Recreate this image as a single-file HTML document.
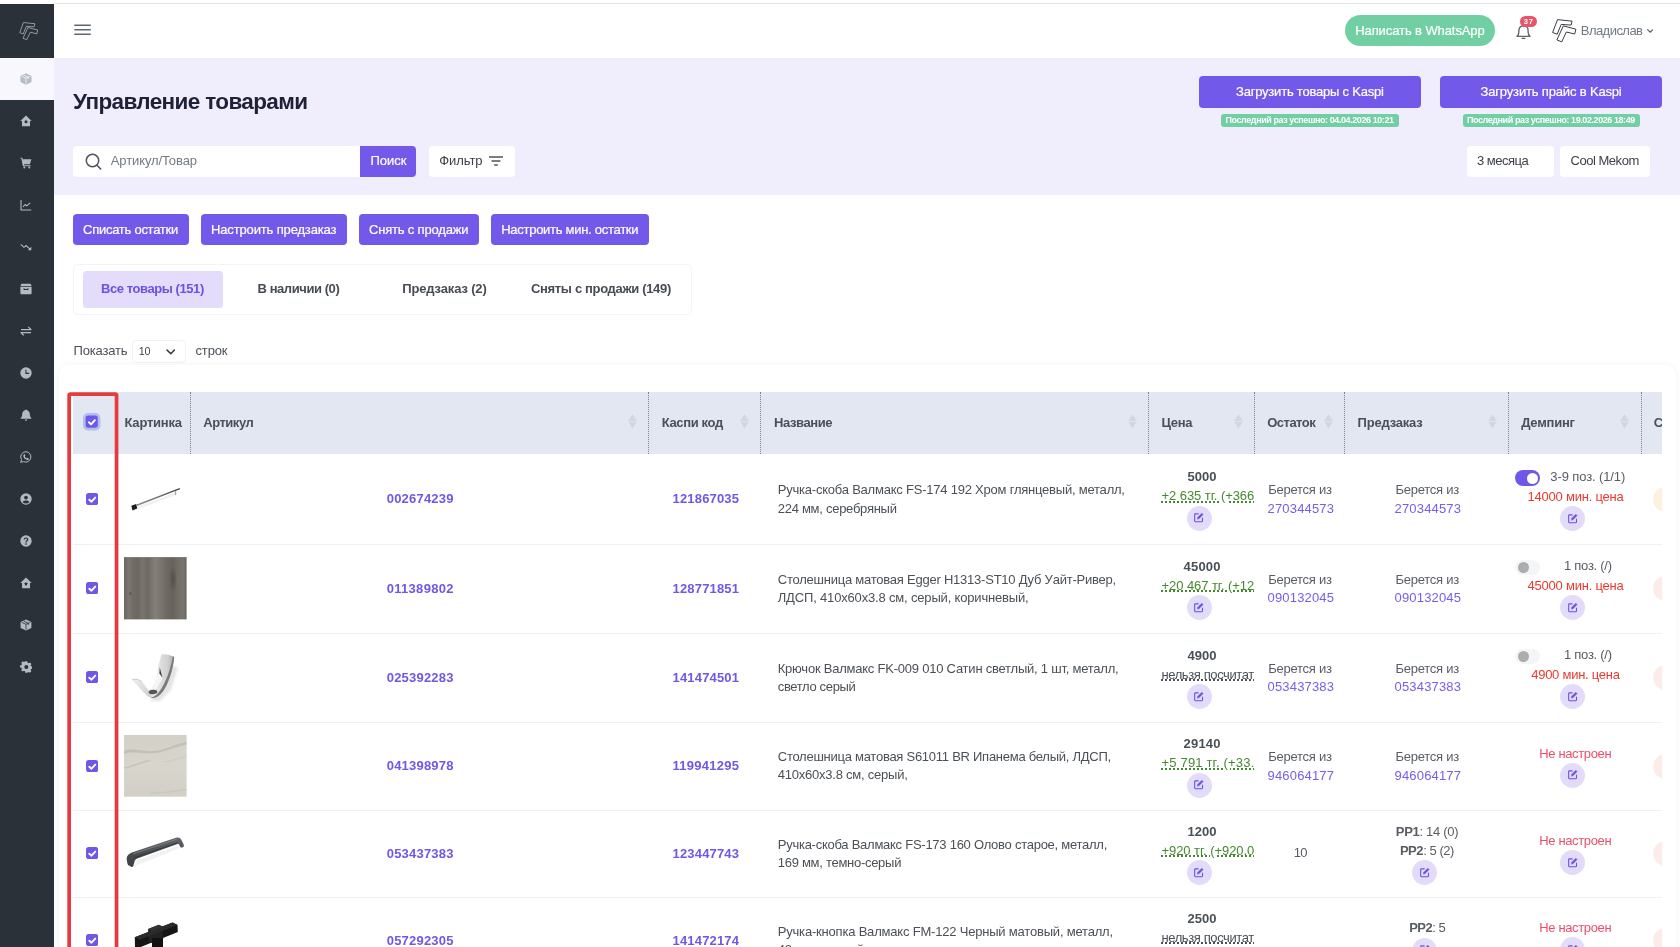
<!DOCTYPE html>
<html lang="ru">
<head>
<meta charset="utf-8">
<title>Управление товарами</title>
<style>
*{box-sizing:border-box}
html,body{margin:0;padding:0}
body{width:1680px;height:947px;overflow:hidden;position:relative;background:#fff;
  font-family:"Liberation Sans",sans-serif;font-size:13px;color:#495057}
.a,.t,.clip,.eb,.tg,.st,.cb,.sep{position:absolute;display:block}
#txt{position:absolute;left:0;top:0;width:1680px;height:947px;will-change:transform}
.t{white-space:nowrap}
.t b{font-weight:700}
.clip{overflow:hidden}
/* layout blocks */
#topline{left:54px;top:3px;width:1626px;height:1px;background:#e3e4e3}
#side{left:0;top:3.5px;width:54px;height:944px;background:#2a3138}
#side .act{left:0;top:54px;width:54px;height:42px;background:#f7f7fd}
#side svg{position:absolute;left:19.5px;width:12px;height:12px;fill:#b3bac3}
#band{left:54px;top:57.5px;width:1626px;height:137.5px;background:#f0eefc}
.pbtn{background:#7359ea;border-radius:4px}
.wbox{background:#fff;border-radius:4px}
.badge{background:#71cfa3;border-radius:3px;height:13.2px;top:113.8px}
/* table */
#card{left:59px;top:365px;width:1617px;height:620px;background:#fff;border-radius:10px;box-shadow:0 0 7px rgba(70,70,100,.07)}
#thead{left:73px;top:391.75px;width:1589.2px;height:62.5px;background:#e3e7f1}
.vd{top:391.75px;height:62.5px;width:0;border-left:1px dotted #7d838e}
.sort{top:414.2px;width:9px;height:15px}
.sep{left:73px;width:1589.2px;height:1px;background:#f0f0f4}
.cb{left:85.9px;width:12.2px;height:12.2px}
.cb rect{fill:#6f57e8}
.cb path{fill:none;stroke:#fff;stroke-width:1.9;stroke-linecap:round;stroke-linejoin:round}
.cbh{left:83.3px;top:413.2px;width:17.4px;height:17.4px}
.eb{width:25px;height:25px;border-radius:50%;background:#e2dcfa}
.eb svg{position:absolute;left:6.8px;top:6.8px;width:11.4px;height:11.4px;fill:none;stroke:#6a52e2;stroke-width:2.3;stroke-linecap:round;stroke-linejoin:round}
.eb svg .f{fill:#6a52e2;stroke-width:1}
.tg{width:25.4px;height:15.7px;border-radius:8px}
.tg i{position:absolute;border-radius:50%}
.tg.on{background:#6f57e8}
.tg.on i{left:11.7px;top:2.1px;width:11.5px;height:11.5px;background:#fff}
.tg.off{background:#f4f5f7}
.tg.off i{left:2.7px;top:2.4px;width:11px;height:11px;background:#adadad}
.st{left:1653.3px;width:25px;height:25px;border-radius:50%;clip-path:inset(0 16.1px 0 0)}
#redbox{left:65px;top:390px;width:56px;height:560px}
</style>
</head>
<body>
<div class="a" id="topline"></div>

<!-- sidebar -->
<nav class="a" id="side">
  <div class="a act"></div>
  <svg style="left:18.800px;top:18.800px;width:19.500px;height:18px;fill:none;stroke:#c3c8cf;stroke-width:.9" viewBox="0 0 24.500 23.500">
    <path d="M5.300.700 20.300 2.300 19.300 6.300 9.100 5.600 5 15.600.500 13.900z"/><path d="M11.200 7.200 24 10.500 22.800 15.400 14.300 13.400 9.600 23.100 4.800 21.200z"/></svg>
  <svg style="top:69.800px;fill:#b7bdc6" viewBox="0 0 12 12"><path d="M6 .6 11.200 3v6L6 11.400.8 9V3zM6 2 2.700 3.500 6 5l3.300-1.500zM1.900 4.400v3.900l3.500 1.600V6zM8.200 3 4.900 1.500" /><path d="M6 .4 11.400 2.900V9.100L6 11.600.6 9.100V2.900z"/><path d="M6 5.300 1.600 3.300M6 5.300 10.400 3.300M6 5.300V10.600M3.600 2 8.200 4.200V6" stroke="#f7f7fd" stroke-width=".8" fill="none"/></svg>
  <svg style="top:111.800px" viewBox="0 0 12 12"><path d="M6 .5 11.700 6H10v5.200H2V6H.3zM6 5.300a1.500 1.500 0 1 0 0 3 1.500 1.500 0 0 0 0-3z" fill-rule="evenodd"/></svg>
  <svg style="top:153.800px" viewBox="0 0 12 12"><path d="M.5.800h1.800l.5 1.400h8.600l-1.500 5H4.300L4 8.300h6.500v1H3L2.400 7.300 1.500 1.800H.5z"/><circle cx="4.300" cy="10.500" r="1"/><circle cx="9.300" cy="10.500" r="1"/></svg>
  <svg style="top:195.800px" viewBox="0 0 12 12"><path d="M1 1v10h10.300" fill="none" stroke="#b3bac3" stroke-width="1.100"/><path d="M3 7.800 5.300 5.400 6.800 6.800 10.200 3.800" fill="none" stroke="#b3bac3" stroke-width="1.100"/></svg>
  <svg style="top:237.800px" viewBox="0 0 12 12"><path d="M.8 3.300 4 6.300 6 4.600 10.600 8.600" fill="none" stroke="#b3bac3" stroke-width="1.100"/><path d="M11.300 5.800V9.300H7.800z"/></svg>
  <svg style="top:279.800px" viewBox="0 0 12 12"><path d="M1.400.8h9.200L11.600 3H.4zM.4 3.700h11.200v6.500a1 1 0 0 1-1 1H1.400a1 1 0 0 1-1-1zM3.600 5.300v1.600h4.800V5.300h-1v.7H4.600v-.7z" fill-rule="evenodd"/></svg>
  <svg style="top:321.800px" viewBox="0 0 12 12"><path d="M1 4.600h10L8.300 1.900M11 7.600H1L3.700 10.300" fill="none" stroke="#b3bac3" stroke-width="1.250" stroke-linejoin="round"/></svg>
  <svg style="top:363.800px" viewBox="0 0 12 12"><path d="M6 .3a5.700 5.700 0 1 0 0 11.400A5.700 5.700 0 0 0 6 .3zM5.400 2.800h1.100v3h2.700v1.100H5.400z" fill-rule="evenodd"/></svg>
  <svg style="top:405.800px" viewBox="0 0 12 12"><path d="M6 .4c.5 0 .9.300 1 .8 1.800.5 2.800 2 2.800 3.900 0 2 .4 3 1.500 3.900v.8H.7V9c1.100-.9 1.500-1.900 1.500-3.900 0-1.900 1-3.400 2.800-3.900.1-.5.500-.8 1-.8zM4.800 10.500h2.400a1.200 1.200 0 0 1-2.400 0z"/></svg>
  <svg style="top:447.800px" viewBox="0 0 12 12"><path d="M6 .7a5.200 5.200 0 0 0-4.500 7.900L.7 11.300l2.800-.7A5.200 5.200 0 1 0 6 .7z" fill="none" stroke="#b3bac3" stroke-width="1"/><path d="M4.300 3.300c.3-.1.500 0 .6.300l.4 1c0 .2 0 .4-.2.500l-.3.400c.5.900 1.100 1.500 2 1.900l.4-.4c.2-.1.300-.2.500-.1l1 .5c.2.100.3.300.2.600-.2.700-.8 1.100-1.500 1C5.300 8.700 3.600 7 3.300 5c0-.7.300-1.400 1-1.700z"/></svg>
  <svg style="top:489.800px" viewBox="0 0 12 12"><path d="M6 .3a5.700 5.700 0 1 0 0 11.400A5.700 5.700 0 0 0 6 .3zM6 2.700a1.900 1.900 0 1 1 0 3.800 1.900 1.900 0 0 1 0-3.800zM6 7.400c1.500 0 2.800.5 3.400 1.500A4.300 4.300 0 0 1 6 10.500 4.300 4.300 0 0 1 2.600 8.900C3.200 7.900 4.500 7.400 6 7.400z" fill-rule="evenodd"/></svg>
  <svg style="top:531.800px" viewBox="0 0 12 12"><path d="M6 .3a5.700 5.700 0 1 0 0 11.400A5.700 5.700 0 0 0 6 .3zM5.300 8.300h1.400v1.400H5.300zM6 2.400c1.400 0 2.300.8 2.300 2 0 .9-.5 1.400-1.100 1.800-.5.300-.6.600-.6 1.200H5.400c0-1 .2-1.500.9-2 .5-.3.700-.6.700-1 0-.5-.4-.8-1-.8s-1 .4-1.100 1H3.600C3.700 3.300 4.600 2.400 6 2.400z" fill-rule="evenodd"/></svg>
  <svg style="top:573.800px" viewBox="0 0 12 12"><path d="M6 .5 11.700 6H10v5.200H2V6H.3zM6 4.800l.6 1.300 1.400.2-1 1 .2 1.400L6 8l-1.200.7.200-1.400-1-1 1.400-.2z" fill-rule="evenodd"/></svg>
  <svg style="top:615.800px" viewBox="0 0 12 12"><path d="M6 .4 11.400 2.900V9.100L6 11.600.6 9.100V2.900z"/><path d="M6 5.300 1.600 3.300M6 5.300 10.400 3.300M6 5.300V10.600M3.600 2 8.200 4.200V6" stroke="#2a3138" stroke-width=".8" fill="none"/></svg>
  <svg style="top:657.800px" viewBox="0 0 12 12"><path d="M5 .3h2l.3 1.500c.4.100.8.300 1.100.5l1.300-.8 1.400 1.400-.8 1.300c.2.300.4.700.5 1.100l1.500.3v2l-1.500.3c-.1.400-.3.800-.5 1.100l.8 1.300-1.400 1.400-1.300-.8c-.3.200-.7.400-1.100.5L7 11.700H5l-.3-1.500c-.4-.1-.8-.3-1.100-.5l-1.300.8L.9 9.100l.8-1.300c-.2-.3-.4-.7-.5-1.100L-.3 6.400v-2l1.500-.3c.1-.4.300-.8.500-1.100L.9 1.700 2.300.3l1.300.8c.3-.2.700-.4 1.100-.5zM6 4a2 2 0 1 0 0 4 2 2 0 0 0 0-4z" fill-rule="evenodd" transform="translate(.3 0)"/></svg>

</nav>

<!-- top bar -->
<header>
  <svg class="a" style="left:74px;top:24px;width:17px;height:12px" viewBox="0 0 17 12"><path d="M.3 1.200h16.500M.3 5.800h16.500M.3 10.300h16.500" stroke="#5e6873" stroke-width="1.600" fill="none"/></svg>
  <div class="a" style="left:1345px;top:15px;width:149.800px;height:31px;border-radius:16px;background:#71cfa3"></div>
  <svg class="a" style="left:1514.500px;top:23.500px;width:17px;height:16px" viewBox="0 0 17 16"><path d="M2 12.300c1.300-1 1.900-2.400 1.900-4.600V6.300C3.900 3.700 5.900 1.700 8.500 1.700s4.600 2 4.600 4.600v1.400c0 2.200.6 3.600 1.900 4.600z" fill="none" stroke="#5b636c" stroke-width="1.350" stroke-linejoin="round"/><path d="M7 14.300h3" stroke="#5b636c" stroke-width="1.300" stroke-linecap="round"/></svg>
  <div class="a" style="left:1520.200px;top:16.300px;width:16.900px;height:10.900px;border-radius:5.500px;background:#e9546c"></div>
  <svg class="a" style="left:1552px;top:19.300px;width:24.500px;height:23.500px;fill:#fff;stroke:#3a3d42;stroke-width:1" viewBox="0 0 24.500 23.500">
    <path d="M5.500.600 20.100 2.200 19.100 6.100 9.200 5.400 5.200 15.200.600 13.500z"/><path d="M11.300 6.900 23.900 10.200 22.700 15 14.300 13 9.700 22.900 4.900 20.900z"/></svg>
  <svg class="a" style="left:1646.500px;top:29.300px;width:6.500px;height:4px" viewBox="0 0 6.500 4"><path d="M.6.600 3.250 3.200 5.900.6" fill="none" stroke="#5b636c" stroke-width="1.200" stroke-linecap="round" stroke-linejoin="round"/></svg>
</header>

<!-- lavender band -->
<section class="a" id="band"></section>
<div class="a pbtn" style="left:1198.500px;top:76.250px;width:222.750px;height:31.500px"></div>
<div class="a pbtn" style="left:1440px;top:76.250px;width:222.250px;height:31.500px"></div>
<div class="a badge" style="left:1221.250px;width:177.500px"></div>
<div class="a badge" style="left:1462.750px;width:177px"></div>
<div class="a wbox" style="left:72.500px;top:146px;width:290px;height:30.500px"></div>
<div class="a pbtn" style="left:360px;top:146px;width:56px;height:30.500px;border-radius:0 4px 4px 0"></div>
<svg class="a" style="left:85px;top:152.500px;width:17px;height:17px" viewBox="0 0 17 17"><circle cx="7.500" cy="7.500" r="6.200" fill="none" stroke="#4d5560" stroke-width="1.500"/><path d="M12 12.200 15.700 16" stroke="#4d5560" stroke-width="1.600" stroke-linecap="round"/></svg>
<div class="a wbox" style="left:429.250px;top:146px;width:85.500px;height:30.500px"></div>
<svg class="a" style="left:489px;top:156px;width:14px;height:10px" viewBox="0 0 14 10"><path d="M.3 1h13.400M3 5h8M5.700 9h2.600" stroke="#4d5560" stroke-width="1.400" stroke-linecap="round" fill="none"/></svg>
<div class="a wbox" style="left:1467px;top:146px;width:86.750px;height:30.500px"></div>
<div class="a wbox" style="left:1560.250px;top:146px;width:89.750px;height:30.500px"></div>

<!-- action buttons -->
<div class="a pbtn" style="left:73px;top:214.250px;width:115.500px;height:30.500px"></div>
<div class="a pbtn" style="left:200.750px;top:214.250px;width:146px;height:30.500px"></div>
<div class="a pbtn" style="left:359px;top:214.250px;width:119.500px;height:30.500px"></div>
<div class="a pbtn" style="left:490.750px;top:214.250px;width:158.250px;height:30.500px"></div>

<!-- tabs -->
<div class="a" style="left:73px;top:263.750px;width:618.500px;height:50.750px;border:1px solid #f4f4f8;border-radius:5px"></div>
<div class="a" style="left:83px;top:270.750px;width:139.750px;height:36.750px;border-radius:3.500px;background:#e3dcfb"></div>

<!-- page length -->
<div class="a" style="left:131.500px;top:339.500px;width:54.250px;height:23.250px;border:1px solid #f3f3f7;border-radius:4px"></div>
<svg class="a" style="left:165.500px;top:349px;width:9.500px;height:6px" viewBox="0 0 9.500 6"><path d="M1 1 4.750 4.700 8.500 1" fill="none" stroke="#2f343a" stroke-width="1.500" stroke-linecap="round" stroke-linejoin="round"/></svg>

<!-- table -->
<div class="a" id="card"></div>
<div class="a" id="thead"></div>
<i class="a vd" style="left:190px"></i><i class="a vd" style="left:648px"></i><i class="a vd" style="left:760.25px"></i><i class="a vd" style="left:1148px"></i><i class="a vd" style="left:1253.75px"></i><i class="a vd" style="left:1344px"></i><i class="a vd" style="left:1508px"></i><i class="a vd" style="left:1640.7px"></i>
<svg class="a sort" style="left:627.5px" viewBox="0 0 9 15"><path d="M4.500 0 8.800 7H.2zM4.500 14.600 .2 7.700h8.600z" fill="#d2d6df"/></svg><svg class="a sort" style="left:739.5px" viewBox="0 0 9 15"><path d="M4.500 0 8.800 7H.2zM4.500 14.600 .2 7.700h8.600z" fill="#d2d6df"/></svg><svg class="a sort" style="left:1127.5px" viewBox="0 0 9 15"><path d="M4.500 0 8.800 7H.2zM4.500 14.600 .2 7.700h8.600z" fill="#d2d6df"/></svg><svg class="a sort" style="left:1233.5px" viewBox="0 0 9 15"><path d="M4.500 0 8.800 7H.2zM4.500 14.600 .2 7.700h8.600z" fill="#d2d6df"/></svg><svg class="a sort" style="left:1323.5px" viewBox="0 0 9 15"><path d="M4.500 0 8.800 7H.2zM4.500 14.600 .2 7.700h8.600z" fill="#d2d6df"/></svg><svg class="a sort" style="left:1488px" viewBox="0 0 9 15"><path d="M4.500 0 8.800 7H.2zM4.500 14.600 .2 7.700h8.600z" fill="#d2d6df"/></svg><svg class="a sort" style="left:1619.7px" viewBox="0 0 9 15"><path d="M4.500 0 8.800 7H.2zM4.500 14.600 .2 7.700h8.600z" fill="#d2d6df"/></svg>
<svg class="a cb cbh" viewBox="0 0 17.400 17.400"><rect width="17.400" height="17.400" rx="5" style="fill:#afbff1"/><rect x="2.600" y="2.600" width="12.200" height="12.200" rx="2.700"/><path d="M5.900 9.300 8.100 11.300 11.900 7.200"/></svg>
<!-- product pictures (drawn as inline SVG) -->
<svg class="a" style="left:129px;top:485px;width:54px;height:28px" viewBox="129 485 54 28">
  <defs><linearGradient id="g1" x1="0" y1="1" x2="1" y2="0"><stop offset="0" stop-color="#8a8a8a"/><stop offset=".55" stop-color="#6f6f6f"/><stop offset="1" stop-color="#3c3c3c"/></linearGradient></defs>
  <path d="M137 506.800 176 492.200 176 495.300 137.500 509.300z" fill="#f1f1f1"/>
  <path d="M136.500 504.600 179.600 488.100 180 489.200 137 505.900z" fill="url(#g1)"/>
  <path d="M175.100 491.200h1.100v3.800h-1.100z" fill="#9a9a9a"/>
  <path d="M131.300 505.700 136.200 503.900 137.200 508.500 132.500 510.400z" fill="#1d1d1d"/>
</svg>
<svg class="a" style="left:124.300px;top:557.400px;width:62.600px;height:62.400px" viewBox="0 0 62.600 62.400" preserveAspectRatio="none">
  <defs><linearGradient id="g2" x1="0" y1="0" x2="1" y2="0">
    <stop offset="0" stop-color="#6b6661"/><stop offset=".08" stop-color="#7d7772"/><stop offset=".14" stop-color="#726c67"/><stop offset=".22" stop-color="#6d6762"/>
    <stop offset=".3" stop-color="#79736e"/><stop offset=".38" stop-color="#6f6964"/><stop offset=".5" stop-color="#86807a"/><stop offset=".58" stop-color="#7b756f"/>
    <stop offset=".66" stop-color="#716b66"/><stop offset=".78" stop-color="#66615c"/><stop offset=".86" stop-color="#736d68"/><stop offset=".94" stop-color="#7a746f"/><stop offset="1" stop-color="#6a6560"/></linearGradient>
    <radialGradient id="g2b" cx=".5" cy=".5" r=".5"><stop offset="0" stop-color="#4e4a46" stop-opacity=".75"/><stop offset="1" stop-color="#4e4a46" stop-opacity="0"/></radialGradient></defs>
  <rect width="62.600" height="62.400" fill="url(#g2)"/>
  <ellipse cx="49" cy="22" rx="4" ry="13" fill="url(#g2b)"/>
  <ellipse cx="6.500" cy="36.500" rx="2" ry="2.500" fill="url(#g2b)"/>
  <rect width="62.600" height="1" fill="#8b8580" opacity=".6"/>
</svg>
<svg class="a" style="left:129px;top:650px;width:54px;height:56px" viewBox="129 650 54 56">
  <defs><linearGradient id="g3" x1="0" y1="0" x2="1" y2="0"><stop offset="0" stop-color="#f0f0f0"/><stop offset=".5" stop-color="#e2e2e2"/><stop offset=".8" stop-color="#cfcfcf"/><stop offset="1" stop-color="#a9a9a9"/></linearGradient>
  <linearGradient id="g3b" x1="0" y1="0" x2="1" y2="1"><stop offset="0" stop-color="#efefef"/><stop offset="1" stop-color="#cdcdcd"/></linearGradient>
  <filter id="bl"><feGaussianBlur stdDeviation="1.300"/></filter></defs>
  <path d="M170 664 178 668 171 690 160 701 150 701z" fill="#bdbdbd" opacity=".4" filter="url(#bl)"/>
  <path d="M161.300 654.300C165.500 653.700 171 654.800 174.200 657C173.500 664 172 671 170.200 676.100C168 683 165.500 688 162.900 691.400C160 695 157.500 697 154.900 697.800C153 698.300 151.500 698 150.100 697.400L147.700 696.200L144 690L153.300 689C155.500 684 157.500 674 158.100 667.300z" fill="url(#g3)"/>
  <path d="M174.200 657C173.500 664 172 671 170.200 676.100C168 683 165.500 688 162.900 691.400C160 695 157.500 697 154.900 697.800C153 698.300 151.500 698 150.100 697.400C152.500 697.600 154.500 696.500 156.500 694.800C163 689 170 673 172.900 656.300z" fill="#7b7b7b"/>
  <path d="M132 679.700C135 678.600 139 679.300 142.100 681.700C145 685 148 690 150.100 692.500L152 697.500L147.700 696.200C142 691 137 685 132 679.700z" fill="url(#g3b)"/>
  <path d="M159.700 667.300 162.800 678.500 154.500 691.500 150.500 690.500C154 685 157.500 676 159.700 667.300z" fill="#f6f6f6"/>
  <path d="M159.700 667.300 162.500 677.700 159.400 673.600z" fill="#3d3d3d"/>
  <ellipse cx="153" cy="692" rx="4.400" ry="2.200" fill="#555" transform="rotate(-6 153 692)"/>
  <path d="M132 679.700C135 678.600 139 679.300 142.100 681.700" fill="none" stroke="#b9b9b9" stroke-width=".7"/>
</svg>
<svg class="a" style="left:124.300px;top:735.200px;width:62.600px;height:61.700px" viewBox="0 0 62.600 61.700" preserveAspectRatio="none">
  <defs><linearGradient id="g4" x1="0" y1="0" x2="0" y2="1"><stop offset="0" stop-color="#d3d0c7"/><stop offset=".5" stop-color="#d8d5cc"/><stop offset="1" stop-color="#d2cfc6"/></linearGradient></defs>
  <rect width="62.600" height="61.700" fill="url(#g4)"/>
  <path d="M0 16c10-4 18 1 30 0s20-7 32.600-9v2.500C50 12 42 17 30 18S10 15.500 0 19z" fill="#bdbab1" opacity=".75"/>
  <path d="M0 33c9-1.500 17-6 26-7.500" stroke="#c2bfb6" stroke-width="1.400" fill="none" opacity=".8"/>
  <path d="M26 58c12 .5 24-2 36.600-3.500" stroke="#c6c3ba" stroke-width="1.200" fill="none" opacity=".7"/>
  <path d="M40 27c8-1 15-3 22.600-6" stroke="#cbc8bf" stroke-width="1.200" fill="none" opacity=".7"/>
</svg>
<svg class="a" style="left:124px;top:834px;width:64px;height:38px" viewBox="124 834 64 38">
  <defs><linearGradient id="g5" x1="0" y1="0" x2="0" y2="1"><stop offset="0" stop-color="#63666a"/><stop offset=".5" stop-color="#4b4e52"/><stop offset="1" stop-color="#3b3d40"/></linearGradient></defs>
  <path d="M134 866.500 136.500 860.500 177 846 180 848z" fill="#f2f2f2"/>
  <path d="M132.600 852.200 176 837.700C178.500 837.100 180.300 838 181.300 839.800L183.600 844.200C184 845.300 183.900 846.400 183.400 846.900L181.300 847.700C180.500 847.500 180 846.900 179.700 846.100L179.200 844.600C178.800 844 178.200 843.900 177.500 844.100L137.200 858.600C135.800 859.200 134.900 860.200 134.500 861.700L133.300 866C133 866.700 132.400 867 131.700 866.900L129 865.600C128 865 127.500 864 127.300 862.900L126.700 859.500C126.400 856 128.800 853.500 132.600 852.200z" fill="url(#g5)"/>
  <path d="M133.500 853.700 176.500 839.300" stroke="#85888c" stroke-width=".8" fill="none"/>
  <path d="M135 857.600 177.500 842.800" stroke="#2f3134" stroke-width=".8" fill="none"/>
</svg>
<svg class="a" style="left:130px;top:918px;width:52px;height:29px" viewBox="130 918 52 29">
  <path d="M134.800 937.200 172.600 922.600 177.500 924.900 177.800 932 139.500 947.500 135 947.500z" fill="#151515"/>
  <path d="M148.100 929 158.800 924.700 162.800 926.700 163.200 938.600 152.500 943.500 148.400 941z" fill="#222"/>
  <path d="M152 938h11v10h-11z" fill="#111"/>
  <path d="M134.800 937.200 172.600 922.600 177.500 924.900 139.700 939.800z" fill="#2b2b2b"/>
  <path d="M148.100 929 158.800 924.700 162.800 926.700 152.300 931.200z" fill="#333"/>
</svg>

<span class="eb" style="left:1186.50px;top:505.70px"><svg class="ei" viewBox="0 0 24 24"><path d="M20 13v6.2a1.3 1.3 0 0 1-1.3 1.3H4.8a1.3 1.3 0 0 1-1.3-1.3V5.3A1.3 1.3 0 0 1 4.800 4H11" /><path d="M9.500 14.500l.5-3.200L18.600 2.700l2.700 2.700-8.600 8.600z" class="f"/></svg></span>
<span class="tg on" style="left:1515px;top:470.45px"><i></i></span>
<span class="eb" style="left:1559.80px;top:506.10px"><svg class="ei" viewBox="0 0 24 24"><path d="M20 13v6.2a1.3 1.3 0 0 1-1.3 1.3H4.8a1.3 1.3 0 0 1-1.3-1.3V5.3A1.3 1.3 0 0 1 4.800 4H11" /><path d="M9.500 14.500l.5-3.200L18.600 2.700l2.700 2.700-8.600 8.600z" class="f"/></svg></span>
<span class="st" style="top:486.80px;background:#fdf0df"></span>
<svg class="cb" style="top:492.90px" viewBox="0 0 12.2 12.2"><rect width="12.2" height="12.2" rx="2.7"/><path d="M3.300 6.700 5.500 8.700 9.300 4.600"/></svg>
<span class="eb" style="left:1186.50px;top:595.05px"><svg class="ei" viewBox="0 0 24 24"><path d="M20 13v6.2a1.3 1.3 0 0 1-1.3 1.3H4.8a1.3 1.3 0 0 1-1.3-1.3V5.3A1.3 1.3 0 0 1 4.800 4H11" /><path d="M9.500 14.500l.5-3.200L18.600 2.700l2.700 2.700-8.600 8.600z" class="f"/></svg></span>
<span class="tg off" style="left:1515px;top:559.80px"><i></i></span>
<span class="eb" style="left:1559.80px;top:595.45px"><svg class="ei" viewBox="0 0 24 24"><path d="M20 13v6.2a1.3 1.3 0 0 1-1.3 1.3H4.8a1.3 1.3 0 0 1-1.3-1.3V5.3A1.3 1.3 0 0 1 4.800 4H11" /><path d="M9.500 14.500l.5-3.200L18.600 2.700l2.700 2.700-8.600 8.600z" class="f"/></svg></span>
<span class="st" style="top:576.15px;background:#fdebe8"></span>
<svg class="cb" style="top:582.25px" viewBox="0 0 12.2 12.2"><rect width="12.2" height="12.2" rx="2.7"/><path d="M3.300 6.700 5.500 8.700 9.300 4.600"/></svg>
<span class="sep" style="top:543.80px"></span>
<span class="eb" style="left:1186.50px;top:684.05px"><svg class="ei" viewBox="0 0 24 24"><path d="M20 13v6.2a1.3 1.3 0 0 1-1.3 1.3H4.8a1.3 1.3 0 0 1-1.3-1.3V5.3A1.3 1.3 0 0 1 4.800 4H11" /><path d="M9.500 14.500l.5-3.200L18.600 2.700l2.700 2.700-8.600 8.600z" class="f"/></svg></span>
<span class="tg off" style="left:1515px;top:648.80px"><i></i></span>
<span class="eb" style="left:1559.80px;top:684.45px"><svg class="ei" viewBox="0 0 24 24"><path d="M20 13v6.2a1.3 1.3 0 0 1-1.3 1.3H4.8a1.3 1.3 0 0 1-1.3-1.3V5.3A1.3 1.3 0 0 1 4.800 4H11" /><path d="M9.500 14.500l.5-3.200L18.600 2.700l2.700 2.700-8.600 8.600z" class="f"/></svg></span>
<span class="st" style="top:665.15px;background:#fdebe8"></span>
<svg class="cb" style="top:671.25px" viewBox="0 0 12.2 12.2"><rect width="12.2" height="12.2" rx="2.7"/><path d="M3.300 6.700 5.500 8.700 9.300 4.600"/></svg>
<span class="sep" style="top:632.50px"></span>
<span class="eb" style="left:1186.50px;top:772.65px"><svg class="ei" viewBox="0 0 24 24"><path d="M20 13v6.2a1.3 1.3 0 0 1-1.3 1.3H4.8a1.3 1.3 0 0 1-1.3-1.3V5.3A1.3 1.3 0 0 1 4.800 4H11" /><path d="M9.500 14.500l.5-3.200L18.600 2.700l2.700 2.700-8.600 8.600z" class="f"/></svg></span>
<span class="eb" style="left:1559.80px;top:762.65px"><svg class="ei" viewBox="0 0 24 24"><path d="M20 13v6.2a1.3 1.3 0 0 1-1.3 1.3H4.8a1.3 1.3 0 0 1-1.3-1.3V5.3A1.3 1.3 0 0 1 4.800 4H11" /><path d="M9.500 14.500l.5-3.200L18.600 2.700l2.700 2.700-8.600 8.600z" class="f"/></svg></span>
<span class="st" style="top:753.75px;background:#fdebe8"></span>
<svg class="cb" style="top:759.85px" viewBox="0 0 12.2 12.2"><rect width="12.2" height="12.2" rx="2.7"/><path d="M3.300 6.700 5.500 8.700 9.300 4.600"/></svg>
<span class="sep" style="top:721.80px"></span>
<span class="eb" style="left:1186.50px;top:860.00px"><svg class="ei" viewBox="0 0 24 24"><path d="M20 13v6.2a1.3 1.3 0 0 1-1.3 1.3H4.8a1.3 1.3 0 0 1-1.3-1.3V5.3A1.3 1.3 0 0 1 4.800 4H11" /><path d="M9.500 14.500l.5-3.200L18.600 2.700l2.700 2.700-8.600 8.600z" class="f"/></svg></span>
<span class="eb" style="left:1411.80px;top:859.90px"><svg class="ei" viewBox="0 0 24 24"><path d="M20 13v6.2a1.3 1.3 0 0 1-1.3 1.3H4.8a1.3 1.3 0 0 1-1.3-1.3V5.3A1.3 1.3 0 0 1 4.800 4H11" /><path d="M9.500 14.500l.5-3.200L18.600 2.700l2.700 2.700-8.600 8.600z" class="f"/></svg></span>
<span class="eb" style="left:1559.80px;top:850.00px"><svg class="ei" viewBox="0 0 24 24"><path d="M20 13v6.2a1.3 1.3 0 0 1-1.3 1.3H4.8a1.3 1.3 0 0 1-1.3-1.3V5.3A1.3 1.3 0 0 1 4.800 4H11" /><path d="M9.500 14.500l.5-3.200L18.600 2.700l2.700 2.700-8.600 8.600z" class="f"/></svg></span>
<span class="st" style="top:841.10px;background:#fdebe8"></span>
<svg class="cb" style="top:847.20px" viewBox="0 0 12.2 12.2"><rect width="12.2" height="12.2" rx="2.7"/><path d="M3.300 6.700 5.500 8.700 9.300 4.600"/></svg>
<span class="sep" style="top:809.70px"></span>
<span class="eb" style="left:1186.50px;top:947.10px"><svg class="ei" viewBox="0 0 24 24"><path d="M20 13v6.2a1.3 1.3 0 0 1-1.3 1.3H4.8a1.3 1.3 0 0 1-1.3-1.3V5.3A1.3 1.3 0 0 1 4.800 4H11" /><path d="M9.500 14.500l.5-3.200L18.600 2.700l2.700 2.700-8.600 8.600z" class="f"/></svg></span>
<span class="eb" style="left:1411.80px;top:937.70px"><svg class="ei" viewBox="0 0 24 24"><path d="M20 13v6.2a1.3 1.3 0 0 1-1.3 1.3H4.8a1.3 1.3 0 0 1-1.3-1.3V5.3A1.3 1.3 0 0 1 4.800 4H11" /><path d="M9.500 14.500l.5-3.200L18.600 2.700l2.700 2.700-8.600 8.600z" class="f"/></svg></span>
<span class="eb" style="left:1559.80px;top:937.10px"><svg class="ei" viewBox="0 0 24 24"><path d="M20 13v6.2a1.3 1.3 0 0 1-1.3 1.3H4.8a1.3 1.3 0 0 1-1.3-1.3V5.3A1.3 1.3 0 0 1 4.800 4H11" /><path d="M9.500 14.500l.5-3.200L18.600 2.700l2.700 2.700-8.600 8.600z" class="f"/></svg></span>
<span class="st" style="top:928.20px;background:#fdebe8"></span>
<svg class="cb" style="top:934.30px" viewBox="0 0 12.2 12.2"><rect width="12.2" height="12.2" rx="2.7"/><path d="M3.300 6.700 5.500 8.700 9.300 4.600"/></svg>
<span class="sep" style="top:896.50px"></span>
<div id="txt">
<span class="t" style="left:73.00px;top:90.77px;font-size:22.5px;line-height:22.5px;color:#1f2237;font-weight:700;letter-spacing:-0.637px;">Управление товарами</span>
<span class="t" style="left:1355.25px;top:23.50px;font-size:13px;line-height:13px;color:#fff;-webkit-text-stroke:0.2px currentColor;letter-spacing:-0.095px;">Написать в WhatsApp</span>
<span class="t" style="left:1523.80px;top:18.11px;font-size:7.6px;line-height:7.6px;color:#fff;font-weight:700;letter-spacing:0.647px;">37</span>
<span class="t" style="left:1580.75px;top:23.50px;font-size:13px;line-height:13px;color:#727a84;letter-spacing:-0.539px;">Владислав</span>
<span class="t" style="left:1236.00px;top:85.25px;font-size:13px;line-height:13px;color:#fff;-webkit-text-stroke:0.2px currentColor;letter-spacing:-0.210px;">Загрузить товары с Kaspi</span>
<span class="t" style="left:1480.50px;top:85.25px;font-size:13px;line-height:13px;color:#fff;-webkit-text-stroke:0.2px currentColor;letter-spacing:-0.165px;">Загрузить прайс в Kaspi</span>
<span class="t" style="left:1225.50px;top:116.01px;font-size:9px;line-height:9px;color:#fff;font-weight:700;letter-spacing:-0.421px;">Последний раз успешно: 04.04.2026 10:21</span>
<span class="t" style="left:1467.00px;top:116.01px;font-size:9px;line-height:9px;color:#fff;font-weight:700;letter-spacing:-0.427px;">Последний раз успешно: 19.02.2026 18:49</span>
<span class="t" style="left:110.75px;top:154.00px;font-size:13px;line-height:13px;color:#747b83;letter-spacing:-0.100px;">Артикул/Товар</span>
<span class="t" style="left:370.50px;top:154.00px;font-size:13px;line-height:13px;color:#fff;-webkit-text-stroke:0.2px currentColor;letter-spacing:-0.008px;">Поиск</span>
<span class="t" style="left:439.25px;top:154.00px;font-size:13px;line-height:13px;color:#3d4249;letter-spacing:-0.084px;">Фильтр</span>
<span class="t" style="left:1477.00px;top:154.00px;font-size:13px;line-height:13px;color:#3d4249;letter-spacing:-0.498px;">3 месяца</span>
<span class="t" style="left:1570.50px;top:154.00px;font-size:13px;line-height:13px;color:#3d4249;letter-spacing:-0.469px;">Cool Mekom</span>
<span class="t" style="left:83.00px;top:222.75px;font-size:13px;line-height:13px;color:#fff;-webkit-text-stroke:0.2px currentColor;letter-spacing:-0.258px;">Списать остатки</span>
<span class="t" style="left:211.00px;top:222.75px;font-size:13px;line-height:13px;color:#fff;-webkit-text-stroke:0.2px currentColor;letter-spacing:-0.147px;">Настроить предзаказ</span>
<span class="t" style="left:369.00px;top:222.75px;font-size:13px;line-height:13px;color:#fff;-webkit-text-stroke:0.2px currentColor;letter-spacing:-0.182px;">Снять с продажи</span>
<span class="t" style="left:501.25px;top:222.75px;font-size:13px;line-height:13px;color:#fff;-webkit-text-stroke:0.2px currentColor;letter-spacing:-0.280px;">Настроить мин. остатки</span>
<span class="t" style="left:101.00px;top:282.25px;font-size:13px;line-height:13px;color:#6a52e2;font-weight:700;letter-spacing:-0.427px;">Все товары (151)</span>
<span class="t" style="left:257.50px;top:282.25px;font-size:13px;line-height:13px;color:#474c54;font-weight:700;letter-spacing:-0.427px;">В наличии (0)</span>
<span class="t" style="left:402.25px;top:282.25px;font-size:13px;line-height:13px;color:#474c54;font-weight:700;letter-spacing:-0.151px;">Предзаказ (2)</span>
<span class="t" style="left:531.00px;top:282.25px;font-size:13px;line-height:13px;color:#474c54;font-weight:700;letter-spacing:-0.336px;">Сняты с продажи (149)</span>
<span class="t" style="left:73.50px;top:344.00px;font-size:13px;line-height:13px;color:#4b5158;letter-spacing:-0.181px;">Показать</span>
<span class="t" style="left:138.75px;top:346.00px;font-size:10.8px;line-height:10.8px;color:#3d4249;letter-spacing:-0.266px;">10</span>
<span class="t" style="left:195.50px;top:344.00px;font-size:13px;line-height:13px;color:#4b5158;letter-spacing:-0.152px;">строк</span>
<span class="t" style="left:124.50px;top:415.60px;font-size:13px;line-height:13px;color:#495057;font-weight:700;letter-spacing:-0.221px;">Картинка</span>
<span class="t" style="left:203.25px;top:415.60px;font-size:13px;line-height:13px;color:#495057;font-weight:700;letter-spacing:-0.474px;">Артикул</span>
<span class="t" style="left:661.75px;top:415.60px;font-size:13px;line-height:13px;color:#495057;font-weight:700;letter-spacing:-0.359px;">Каспи код</span>
<span class="t" style="left:774.00px;top:415.60px;font-size:13px;line-height:13px;color:#495057;font-weight:700;letter-spacing:-0.411px;">Название</span>
<span class="t" style="left:1161.50px;top:415.60px;font-size:13px;line-height:13px;color:#495057;font-weight:700;letter-spacing:-0.323px;">Цена</span>
<span class="t" style="left:1267.25px;top:415.60px;font-size:13px;line-height:13px;color:#495057;font-weight:700;letter-spacing:-0.516px;">Остаток</span>
<span class="t" style="left:1357.50px;top:415.60px;font-size:13px;line-height:13px;color:#495057;font-weight:700;letter-spacing:-0.195px;">Предзаказ</span>
<span class="t" style="left:1521.20px;top:415.60px;font-size:13px;line-height:13px;color:#495057;font-weight:700;letter-spacing:-0.236px;">Демпинг</span>
<span class="clip" style="left:1653.00px;top:413.60px;width:9.20px;height:21.6px"><span class="t" style="left:0.70px;top:2px;font-size:13px;line-height:13px;color:#495057;font-weight:700;letter-spacing:0.097px;">Статус</span></span>
<span class="t" style="left:386.73px;top:492.21px;font-size:13px;line-height:13px;color:#6f58e8;font-weight:700;letter-spacing:0.209px;">002674239</span>
<span class="t" style="left:672.50px;top:492.21px;font-size:13px;line-height:13px;color:#6f58e8;font-weight:700;letter-spacing:0.178px;">121867035</span>
<span class="t" style="left:777.75px;top:483.21px;font-size:13px;line-height:13px;color:#4b5056;letter-spacing:-0.221px;">Ручка-скоба Валмакс FS-174 192 Хром глянцевый, металл,</span>
<span class="t" style="left:777.75px;top:501.50px;font-size:13px;line-height:13px;color:#4b5056;letter-spacing:-0.274px;">224 мм, серебряный</span>
<span class="t" style="left:1187.50px;top:470.40px;font-size:13px;line-height:13px;color:#495057;font-weight:700;letter-spacing:0.026px;">5000</span>
<span class="clip" style="left:1160.00px;top:487.21px;width:94.25px;height:21.6px"><span class="t" style="left:1.50px;top:2px;font-size:13px;line-height:13px;color:#45882f;letter-spacing:-0.062px;text-decoration:underline dotted;text-underline-offset:1.2px;text-decoration-thickness:1.7px;">+2 635 тг. (+366.4%)</span></span>
<span class="t" style="left:1268.25px;top:483.25px;font-size:13px;line-height:13px;color:#585d64;letter-spacing:-0.248px;">Берется из</span>
<span class="t" style="left:1267.50px;top:501.71px;font-size:13px;line-height:13px;color:#7460ea;letter-spacing:0.178px;">270344573</span>
<span class="t" style="left:1395.50px;top:483.25px;font-size:13px;line-height:13px;color:#585d64;letter-spacing:-0.248px;">Берется из</span>
<span class="t" style="left:1394.50px;top:501.71px;font-size:13px;line-height:13px;color:#7460ea;letter-spacing:0.178px;">270344573</span>
<span class="t" style="left:1550.30px;top:469.80px;font-size:13px;line-height:13px;color:#585d64;letter-spacing:-0.112px;">3-9 поз. (1/1)</span>
<span class="t" style="left:1527.50px;top:489.85px;font-size:13px;line-height:13px;color:#e93a30;letter-spacing:-0.222px;">14000 мин. цена</span>
<span class="t" style="left:386.73px;top:581.55px;font-size:13px;line-height:13px;color:#6f58e8;font-weight:700;letter-spacing:0.299px;">011389802</span>
<span class="t" style="left:672.50px;top:581.55px;font-size:13px;line-height:13px;color:#6f58e8;font-weight:700;letter-spacing:0.178px;">128771851</span>
<span class="t" style="left:777.75px;top:572.55px;font-size:13px;line-height:13px;color:#4b5056;letter-spacing:-0.231px;">Столешница матовая Egger H1313-ST10 Дуб Уайт-Ривер,</span>
<span class="t" style="left:777.75px;top:590.85px;font-size:13px;line-height:13px;color:#4b5056;letter-spacing:-0.171px;">ЛДСП, 410x60x3.8 см, серый, коричневый,</span>
<span class="t" style="left:1183.50px;top:559.75px;font-size:13px;line-height:13px;color:#495057;font-weight:700;letter-spacing:0.211px;">45000</span>
<span class="clip" style="left:1160.00px;top:576.55px;width:94.25px;height:21.6px"><span class="t" style="left:1.50px;top:2px;font-size:13px;line-height:13px;color:#45882f;letter-spacing:-0.062px;text-decoration:underline dotted;text-underline-offset:1.2px;text-decoration-thickness:1.7px;">+20 467 тг. (+12.8%)</span></span>
<span class="t" style="left:1268.25px;top:572.60px;font-size:13px;line-height:13px;color:#585d64;letter-spacing:-0.248px;">Берется из</span>
<span class="t" style="left:1267.50px;top:591.05px;font-size:13px;line-height:13px;color:#7460ea;letter-spacing:0.178px;">090132045</span>
<span class="t" style="left:1395.50px;top:572.60px;font-size:13px;line-height:13px;color:#585d64;letter-spacing:-0.248px;">Берется из</span>
<span class="t" style="left:1394.50px;top:591.05px;font-size:13px;line-height:13px;color:#7460ea;letter-spacing:0.178px;">090132045</span>
<span class="t" style="left:1564.00px;top:559.15px;font-size:13px;line-height:13px;color:#585d64;letter-spacing:-0.269px;">1 поз. (/)</span>
<span class="t" style="left:1527.50px;top:579.21px;font-size:13px;line-height:13px;color:#e93a30;letter-spacing:-0.222px;">45000 мин. цена</span>
<span class="t" style="left:386.73px;top:670.55px;font-size:13px;line-height:13px;color:#6f58e8;font-weight:700;letter-spacing:0.209px;">025392283</span>
<span class="t" style="left:672.50px;top:670.55px;font-size:13px;line-height:13px;color:#6f58e8;font-weight:700;letter-spacing:0.178px;">141474501</span>
<span class="t" style="left:777.75px;top:661.55px;font-size:13px;line-height:13px;color:#4b5056;letter-spacing:-0.226px;">Крючок Валмакс FK-009 010 Сатин светлый, 1 шт, металл,</span>
<span class="t" style="left:777.75px;top:679.85px;font-size:13px;line-height:13px;color:#4b5056;letter-spacing:-0.348px;">светло серый</span>
<span class="t" style="left:1187.50px;top:648.75px;font-size:13px;line-height:13px;color:#495057;font-weight:700;letter-spacing:0.026px;">4900</span>
<span class="clip" style="left:1160.00px;top:665.55px;width:94.25px;height:21.6px"><span class="t" style="left:1.50px;top:2px;font-size:13px;line-height:13px;color:#495057;letter-spacing:-0.397px;text-decoration:underline dotted;text-underline-offset:1.2px;text-decoration-thickness:1.7px;">нельзя посчитать</span></span>
<span class="t" style="left:1268.25px;top:661.60px;font-size:13px;line-height:13px;color:#585d64;letter-spacing:-0.248px;">Берется из</span>
<span class="t" style="left:1267.50px;top:680.05px;font-size:13px;line-height:13px;color:#7460ea;letter-spacing:0.178px;">053437383</span>
<span class="t" style="left:1395.50px;top:661.60px;font-size:13px;line-height:13px;color:#585d64;letter-spacing:-0.248px;">Берется из</span>
<span class="t" style="left:1394.50px;top:680.05px;font-size:13px;line-height:13px;color:#7460ea;letter-spacing:0.178px;">053437383</span>
<span class="t" style="left:1564.00px;top:648.15px;font-size:13px;line-height:13px;color:#585d64;letter-spacing:-0.269px;">1 поз. (/)</span>
<span class="t" style="left:1531.20px;top:668.21px;font-size:13px;line-height:13px;color:#e93a30;letter-spacing:-0.252px;">4900 мин. цена</span>
<span class="t" style="left:386.73px;top:759.15px;font-size:13px;line-height:13px;color:#6f58e8;font-weight:700;letter-spacing:0.209px;">041398978</span>
<span class="t" style="left:672.50px;top:759.15px;font-size:13px;line-height:13px;color:#6f58e8;font-weight:700;letter-spacing:0.268px;">119941295</span>
<span class="t" style="left:777.75px;top:750.15px;font-size:13px;line-height:13px;color:#4b5056;letter-spacing:-0.260px;">Столешница матовая S61011 BR Ипанема белый, ЛДСП,</span>
<span class="t" style="left:777.75px;top:768.46px;font-size:13px;line-height:13px;color:#4b5056;letter-spacing:-0.231px;">410x60x3.8 см, серый,</span>
<span class="t" style="left:1183.50px;top:737.35px;font-size:13px;line-height:13px;color:#495057;font-weight:700;letter-spacing:0.211px;">29140</span>
<span class="clip" style="left:1160.00px;top:754.15px;width:94.25px;height:21.6px"><span class="t" style="left:1.50px;top:2px;font-size:13px;line-height:13px;color:#45882f;letter-spacing:0.179px;text-decoration:underline dotted;text-underline-offset:1.2px;text-decoration-thickness:1.7px;">+5 791 тг. (+33.8%)</span></span>
<span class="t" style="left:1268.25px;top:750.21px;font-size:13px;line-height:13px;color:#585d64;letter-spacing:-0.248px;">Берется из</span>
<span class="t" style="left:1267.50px;top:768.65px;font-size:13px;line-height:13px;color:#7460ea;letter-spacing:0.178px;">946064177</span>
<span class="t" style="left:1395.50px;top:750.21px;font-size:13px;line-height:13px;color:#585d64;letter-spacing:-0.248px;">Берется из</span>
<span class="t" style="left:1394.50px;top:768.65px;font-size:13px;line-height:13px;color:#7460ea;letter-spacing:0.178px;">946064177</span>
<span class="t" style="left:1539.20px;top:746.65px;font-size:13px;line-height:13px;color:#ea506b;letter-spacing:-0.347px;">Не настроен</span>
<span class="t" style="left:386.73px;top:846.50px;font-size:13px;line-height:13px;color:#6f58e8;font-weight:700;letter-spacing:0.209px;">053437383</span>
<span class="t" style="left:672.50px;top:846.50px;font-size:13px;line-height:13px;color:#6f58e8;font-weight:700;letter-spacing:0.178px;">123447743</span>
<span class="t" style="left:777.75px;top:837.50px;font-size:13px;line-height:13px;color:#4b5056;letter-spacing:-0.258px;">Ручка-скоба Валмакс FS-173 160 Олово старое, металл,</span>
<span class="t" style="left:777.75px;top:855.80px;font-size:13px;line-height:13px;color:#4b5056;letter-spacing:-0.280px;">169 мм, темно-серый</span>
<span class="t" style="left:1187.50px;top:824.71px;font-size:13px;line-height:13px;color:#495057;font-weight:700;letter-spacing:0.026px;">1200</span>
<span class="clip" style="left:1160.00px;top:841.50px;width:94.25px;height:21.6px"><span class="t" style="left:1.50px;top:2px;font-size:13px;line-height:13px;color:#45882f;letter-spacing:-0.062px;text-decoration:underline dotted;text-underline-offset:1.2px;text-decoration-thickness:1.7px;">+920 тг. (+920.0%)</span></span>
<span class="t" style="left:1293.80px;top:846.21px;font-size:13px;line-height:13px;color:#585d64;letter-spacing:-0.869px;">10</span>
<span class="t" style="left:1395.80px;top:824.90px;font-size:13px;line-height:13px;color:#585d64;letter-spacing:-0.307px;"><b>PP1</b>: 14 (0)</span>
<span class="t" style="left:1399.90px;top:843.90px;font-size:13px;line-height:13px;color:#585d64;letter-spacing:-0.450px;"><b>PP2</b>: 5 (2)</span>
<span class="t" style="left:1539.20px;top:834.00px;font-size:13px;line-height:13px;color:#ea506b;letter-spacing:-0.347px;">Не настроен</span>
<span class="t" style="left:386.73px;top:933.60px;font-size:13px;line-height:13px;color:#6f58e8;font-weight:700;letter-spacing:0.209px;">057292305</span>
<span class="t" style="left:672.50px;top:933.60px;font-size:13px;line-height:13px;color:#6f58e8;font-weight:700;letter-spacing:0.178px;">141472174</span>
<span class="t" style="left:777.75px;top:924.60px;font-size:13px;line-height:13px;color:#4b5056;letter-spacing:-0.196px;">Ручка-кнопка Валмакс FM-122 Черный матовый, металл,</span>
<span class="t" style="left:777.75px;top:942.90px;font-size:13px;line-height:13px;color:#4b5056;letter-spacing:-0.163px;">42 мм, черный</span>
<span class="t" style="left:1187.50px;top:911.80px;font-size:13px;line-height:13px;color:#495057;font-weight:700;letter-spacing:0.026px;">2500</span>
<span class="clip" style="left:1160.00px;top:928.60px;width:94.25px;height:21.6px"><span class="t" style="left:1.50px;top:2px;font-size:13px;line-height:13px;color:#495057;letter-spacing:-0.397px;text-decoration:underline dotted;text-underline-offset:1.2px;text-decoration-thickness:1.7px;">нельзя посчитать</span></span>
<span class="t" style="left:1409.20px;top:921.10px;font-size:13px;line-height:13px;color:#585d64;letter-spacing:-0.489px;"><b>PP2</b>: 5</span>
<span class="t" style="left:1539.20px;top:921.10px;font-size:13px;line-height:13px;color:#ea506b;letter-spacing:-0.347px;">Не настроен</span>
</div>
<svg class="a" id="redbox" viewBox="0 0 56 560"><rect x="4.150" y="4.050" width="47.400" height="570" rx="1.200" fill="none" stroke="#e53b3e" stroke-width="3.700"/></svg>
</body>
</html>
